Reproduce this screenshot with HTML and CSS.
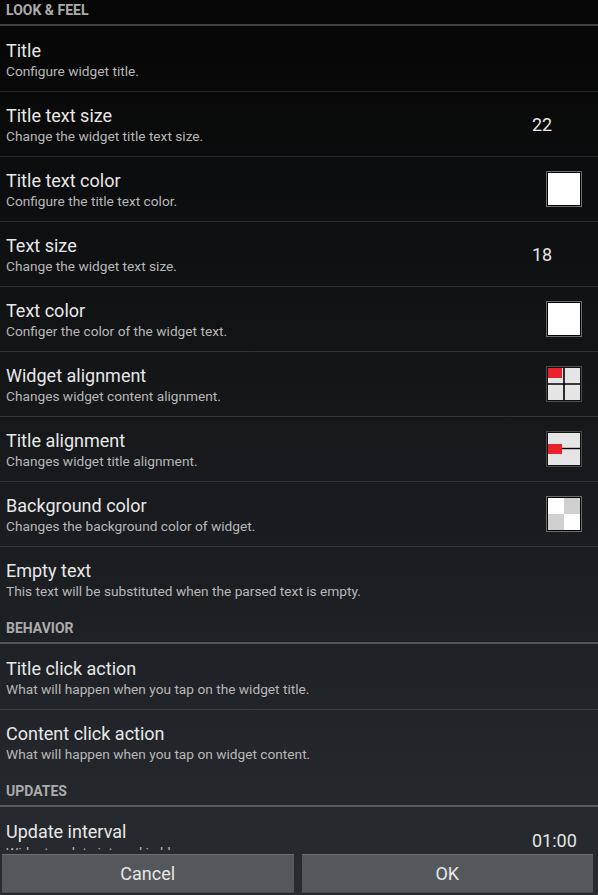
FILE: index.html
```html
<!DOCTYPE html>
<html>
<head>
<meta charset="utf-8">
<link rel="stylesheet" href="styles.css">
</head>
<body>
<div class="screen">
  <div class="list">
    <div class="list-scroll">
      <div class="cat">LOOK &amp; FEEL</div>

      <div class="pref first">
        <div class="pref-text"><div class="pref-title">Title</div><div class="pref-sum">Configure widget title.</div></div>
      </div>

      <div class="pref">
        <div class="pref-text"><div class="pref-title">Title text size</div><div class="pref-sum">Change the widget title text size.</div></div>
        <div class="pref-widget"><span class="pref-value">22</span></div>
      </div>

      <div class="pref">
        <div class="pref-text"><div class="pref-title">Title text color</div><div class="pref-sum">Configure the title text color.</div></div>
        <div class="pref-widget">
          <svg class="swatch" width="36" height="36" viewBox="0 0 36 36"><rect x="0.5" y="0.5" width="35" height="35" fill="#fff" stroke="#6e6e6e"/><rect x="1.5" y="1.5" width="33" height="33" fill="none" stroke="#000"/></svg>
        </div>
      </div>

      <div class="pref">
        <div class="pref-text"><div class="pref-title">Text size</div><div class="pref-sum">Change the widget text size.</div></div>
        <div class="pref-widget"><span class="pref-value">18</span></div>
      </div>

      <div class="pref">
        <div class="pref-text"><div class="pref-title">Text color</div><div class="pref-sum">Configer the color of the widget text.</div></div>
        <div class="pref-widget">
          <svg class="swatch" width="36" height="36" viewBox="0 0 36 36"><rect x="0.5" y="0.5" width="35" height="35" fill="#fff" stroke="#6e6e6e"/><rect x="1.5" y="1.5" width="33" height="33" fill="none" stroke="#000"/></svg>
        </div>
      </div>

      <div class="pref">
        <div class="pref-text"><div class="pref-title">Widget alignment</div><div class="pref-sum">Changes widget content alignment.</div></div>
        <div class="pref-widget">
          <svg class="swatch" width="36" height="36" viewBox="0 0 36 36"><rect x="0.5" y="0.5" width="35" height="35" fill="#e5e5e5" stroke="#4a4a4a"/><rect x="1.5" y="1.5" width="33" height="33" fill="none" stroke="#111"/><rect x="2" y="2" width="14" height="10" fill="#e8212b"/><path d="M18 2V34M2 18H34" stroke="#000" stroke-width="1.6"/></svg>
        </div>
      </div>

      <div class="pref">
        <div class="pref-text"><div class="pref-title">Title alignment</div><div class="pref-sum">Changes widget title alignment.</div></div>
        <div class="pref-widget">
          <svg class="swatch" width="36" height="36" viewBox="0 0 36 36"><rect x="0.5" y="0.5" width="35" height="35" fill="#e5e5e5" stroke="#4a4a4a"/><rect x="1.5" y="1.5" width="33" height="33" fill="none" stroke="#111"/><rect x="2" y="13" width="14" height="10" fill="#e8212b"/><path d="M16 17.5H34" stroke="#000" stroke-width="1.4"/></svg>
        </div>
      </div>

      <div class="pref">
        <div class="pref-text"><div class="pref-title">Background color</div><div class="pref-sum">Changes the background color of widget.</div></div>
        <div class="pref-widget">
          <svg class="swatch" width="36" height="36" viewBox="0 0 36 36"><rect x="0.5" y="0.5" width="35" height="35" fill="#fff" stroke="#6e6e6e"/><rect x="18" y="2" width="16" height="16" fill="#d0d0d0"/><rect x="2" y="18" width="16" height="16" fill="#d0d0d0"/><rect x="1.5" y="1.5" width="33" height="33" fill="none" stroke="#000"/></svg>
        </div>
      </div>

      <div class="pref">
        <div class="pref-text"><div class="pref-title">Empty text</div><div class="pref-sum">This text will be substituted when the parsed text is empty.</div></div>
      </div>

      <div class="cat">BEHAVIOR</div>

      <div class="pref first">
        <div class="pref-text"><div class="pref-title">Title click action</div><div class="pref-sum">What will happen when you tap on the widget title.</div></div>
      </div>

      <div class="pref">
        <div class="pref-text"><div class="pref-title">Content click action</div><div class="pref-sum">What will happen when you tap on widget content.</div></div>
      </div>

      <div class="cat">UPDATES</div>

      <div class="pref first">
        <div class="pref-text"><div class="pref-title">Update interval</div><div class="pref-sum">Widget update interval in hh:mm.</div></div>
        <div class="pref-widget"><span class="pref-value">01:00</span></div>
      </div>
    </div>
  </div>
  <div class="buttons">
    <button class="btn">Cancel</button>
    <button class="btn">OK</button>
  </div>
</div>
</body>
</html>
```

FILE: styles.css
```css
html, body {
  margin: 0;
  height: 100%;
}

body {
  background: linear-gradient(#050505, #282c31);
  font-family: Roboto, "Liberation Sans", sans-serif;
  overflow: hidden;
}

.screen {
  height: 895px;
  display: flex;
  flex-direction: column;
}

.list {
  flex: 1;
  min-height: 0;
  overflow: hidden;
}

.list-scroll {
  margin-top: -7px;
}

.cat {
  height: 33px;
  box-sizing: border-box;
  padding: 10px 6px 0;
  font-size: 14px;
  font-weight: bold;
  line-height: 14px;
  color: #ababab;
  border-bottom: 2px solid rgba(255, 255, 255, 0.24);
}

.pref {
  height: 65px;
  box-sizing: border-box;
  border-top: 1px solid rgba(255, 255, 255, 0.12);
  display: flex;
  align-items: center;
  padding: 0 2px 0 6px;
}

.pref.first {
  border-top-color: transparent;
}

.pref-text {
  flex: 1;
  align-self: flex-start;
  padding-top: 13px;
  white-space: nowrap;
}

.pref-title {
  font-size: 18px;
  line-height: 22px;
  color: #e8e8e8;
}

.pref-sum {
  font-size: 13.7px;
  line-height: 16px;
  margin-top: 1px;
  color: #b8b8b8;
}

.pref-widget {
  width: 64px;
  display: flex;
  justify-content: center;
}

.pref-value {
  width: 64px;
  font-size: 18px;
  color: #e4e4e4;
}

.swatch {
  display: block;
}

.buttons {
  height: 45px;
  box-sizing: border-box;
  display: flex;
  gap: 8px;
  padding: 4px 5px 2px 2px;
}

.btn {
  flex: 1;
  margin: 0;
  padding: 0;
  background: #55585b;
  border: 0;
  border-top: 1px solid #6c6f72;
  border-bottom: 1px solid #45484b;
  color: #e6e6e6;
  font-family: Roboto, "Liberation Sans", sans-serif;
  font-size: 18px;
}
```
